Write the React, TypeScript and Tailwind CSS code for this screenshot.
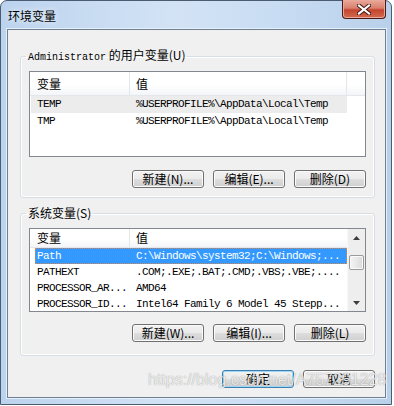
import React from "react";

const cjk = "font-['Noto_Sans_CJK_SC',sans-serif]";
const mono = "font-['Liberation_Mono','Noto_Sans_CJK_SC',monospace] text-[11px] tracking-[-0.6px]";

const btnBase =
  "w-[72px] h-[18px] rounded-[3px] border flex items-center justify-center text-[12px] leading-none text-black bg-[linear-gradient(#f2f2f2_0%,#ebebeb_48%,#dddddd_52%,#cfcfcf_100%)]";

function Btn({ label, primary = false }: { label: string; primary?: boolean }) {
  return (
    <button
      className={
        primary
          ? btnBase + " border-[#3c7fb1] shadow-[inset_0_0_0_1px_#9fd7f4]"
          : btnBase + " border-[#707070] shadow-[inset_0_0_0_1px_#fbfbfb]"
      }
    >
      {label}
    </button>
  );
}

function ListHeader() {
  return (
    <div className="h-[24px] flex border-b border-[#e3e6ea] bg-[linear-gradient(#ffffff_0%,#ffffff_55%,#f3f5f8_100%)] text-[12px]">
      <div className="w-[100px] pl-[7px] flex items-center border-r border-[#e3e6ea]">变量</div>
      <div className="w-[217px] pl-[6px] flex items-center border-r border-[#e3e6ea]">值</div>
      <div className="flex-1" />
    </div>
  );
}

const userVars = [
  ["TEMP", "%USERPROFILE%\\AppData\\Local\\Temp"],
  ["TMP", "%USERPROFILE%\\AppData\\Local\\Temp"],
];

const sysVars = [
  ["Path", "C:\\Windows\\system32;C:\\Windows;..."],
  ["PATHEXT", ".COM;.EXE;.BAT;.CMD;.VBS;.VBE;...."],
  ["PROCESSOR_AR...", "AMD64"],
  ["PROCESSOR_ID...", "Intel64 Family 6 Model 45 Stepp..."],
];

export default function App() {
  return (
    <div className={"w-[394px] h-[406px] bg-white relative overflow-hidden text-black " + cjk}>
      <div className="w-[392px] h-[405px] rounded-t-[7px] border border-[#4b5b70] bg-[linear-gradient(90deg,#bcd3ee_0%,#d3e3f5_45%,#c6dbf2_75%,#b9d0ea_100%)] flex flex-col pl-[6px] pr-[5px] pb-[6px]">
        {/* title bar */}
        <div className="h-[28px] flex items-start justify-between">
          <span className="mt-[8px] ml-[1px] text-[12px] leading-[14px] [text-shadow:0_0_6px_#ffffff]">环境变量</span>
          <div className="-mt-[1px] w-[44px] h-[19px] rounded-b-[4px] border border-[#4a1a14] border-t-0 bg-[linear-gradient(#e9a99a_0%,#d8806d_45%,#c5452f_55%,#d46a50_100%)] flex items-center justify-center shadow-[inset_0_0_0_1px_#eaa89a]">
            <svg width="14" height="11" viewBox="0 0 14 11">
              <path d="M2 1.5 L12 9.5 M12 1.5 L2 9.5" stroke="#3a1410" strokeWidth="4" strokeLinecap="square" />
              <path d="M2 1.5 L12 9.5 M12 1.5 L2 9.5" stroke="#ffffff" strokeWidth="2.2" strokeLinecap="square" />
            </svg>
          </div>
        </div>

        {/* client area */}
        <div className="flex-1 border border-[#6f7f92] bg-[#f0f0f0] flex flex-col shadow-[0_0_0_1px_#e6f0fa]">
          {/* user variables */}
          <fieldset className="mt-[19px] ml-[12px] mr-[10px] border border-[#d5dfe5] rounded-[3px] pt-[7px] px-[8px] pb-[9px] shadow-[inset_0_0_0_1px_#ffffff]">
            <legend className="ml-[-3px] px-[2px] text-[12px] leading-[12px]">
              <span className="font-['Liberation_Mono',monospace] text-[10px]">Administrator</span> 的用户变量(U)
            </legend>
            <div className="h-[86px] border border-[#828790] bg-white">
              <ListHeader />
              {userVars.map(([n, v], i) => (
                <div
                  key={n}
                  className={
                    "ml-[1px] w-[316px] h-[17px] flex items-center " + mono + (i === 0 ? " bg-[#ececec]" : "")
                  }
                >
                  <div className="w-[99px] pl-[6px] whitespace-nowrap">{n}</div>
                  <div className="flex-1 pl-[6px] whitespace-nowrap">{v}</div>
                </div>
              ))}
            </div>
            <div className="mt-[13px] flex justify-end gap-[9px]">
              <Btn label="新建(N)..." />
              <Btn label="编辑(E)..." />
              <Btn label="删除(D)" />
            </div>
          </fieldset>

          {/* system variables */}
          <fieldset className="mt-[9px] ml-[12px] mr-[10px] border border-[#d5dfe5] rounded-[3px] pt-[9px] px-[8px] pb-[13px] shadow-[inset_0_0_0_1px_#ffffff]">
            <legend className="ml-[-3px] px-[2px] text-[12px] leading-[12px]">系统变量(S)</legend>
            <div className="h-[84px] border border-[#828790] bg-white flex overflow-hidden">
              <div className="w-[317px] flex flex-col">
                <div className="h-[23px] flex border-b border-[#e3e6ea] bg-[linear-gradient(#ffffff_0%,#ffffff_55%,#f3f5f8_100%)] text-[12px]">
                  <div className="w-[100px] pl-[7px] flex items-center border-r border-[#e3e6ea]">变量</div>
                  <div className="flex-1 pl-[6px] flex items-center">值</div>
                </div>
                {sysVars.map(([n, v], i) => (
                  <div
                    key={n}
                    className={
                      "ml-[5px] w-[312px] h-[16px] shrink-0 flex items-center " +
                      mono +
                      (i === 0 ? " bg-[#3399ff] text-white outline outline-1 outline-dotted outline-[#d9884a] -outline-offset-1" : "")
                    }
                  >
                    <div className="w-[95px] pl-[2px] whitespace-nowrap">{n}</div>
                    <div className="flex-1 pl-[6px] whitespace-nowrap">{v}</div>
                  </div>
                ))}
              </div>
              {/* scrollbar */}
              <div className="w-[18px] bg-[#eeeeee] border-l border-[#f8f8f8] flex flex-col">
                <div className="h-[17px] flex items-center justify-center">
                  <svg width="7" height="4" viewBox="0 0 7 4">
                    <path d="M3.5 0 L7 4 L0 4 Z" fill="#3d3d3d" />
                  </svg>
                </div>
                <div className="mt-[9px] mx-[1px] h-[15px] rounded-[2px] border border-[#9a9a9a] bg-[linear-gradient(90deg,#f4f4f4_0%,#e8e8e8_50%,#d9d9d9_100%)] shadow-[inset_0_0_0_1px_#fafafa]" />
                <div className="flex-1" />
                <div className="h-[17px] flex items-center justify-center">
                  <svg width="7" height="4" viewBox="0 0 7 4">
                    <path d="M0 0 L7 0 L3.5 4 Z" fill="#3d3d3d" />
                  </svg>
                </div>
              </div>
            </div>
            <div className="mt-[12px] flex justify-end gap-[9px]">
              <Btn label="新建(W)..." />
              <Btn label="编辑(I)..." />
              <Btn label="删除(L)" />
            </div>
          </fieldset>

          {/* dialog buttons */}
          <div className="mt-[14px] mr-[10px] flex justify-end gap-[9px]">
            <Btn label="确定" primary />
            <Btn label="取消" />
          </div>
        </div>
      </div>

      {/* watermark */}
      <div className="absolute left-[148px] top-[371px] font-['Liberation_Sans',sans-serif] text-[16px] leading-[18px] text-white/80 [text-shadow:0_0_1px_rgba(0,0,0,0.45)] whitespace-nowrap pointer-events-none">
        https://blog.csdn.net/A757291228
      </div>
    </div>
  );
}
